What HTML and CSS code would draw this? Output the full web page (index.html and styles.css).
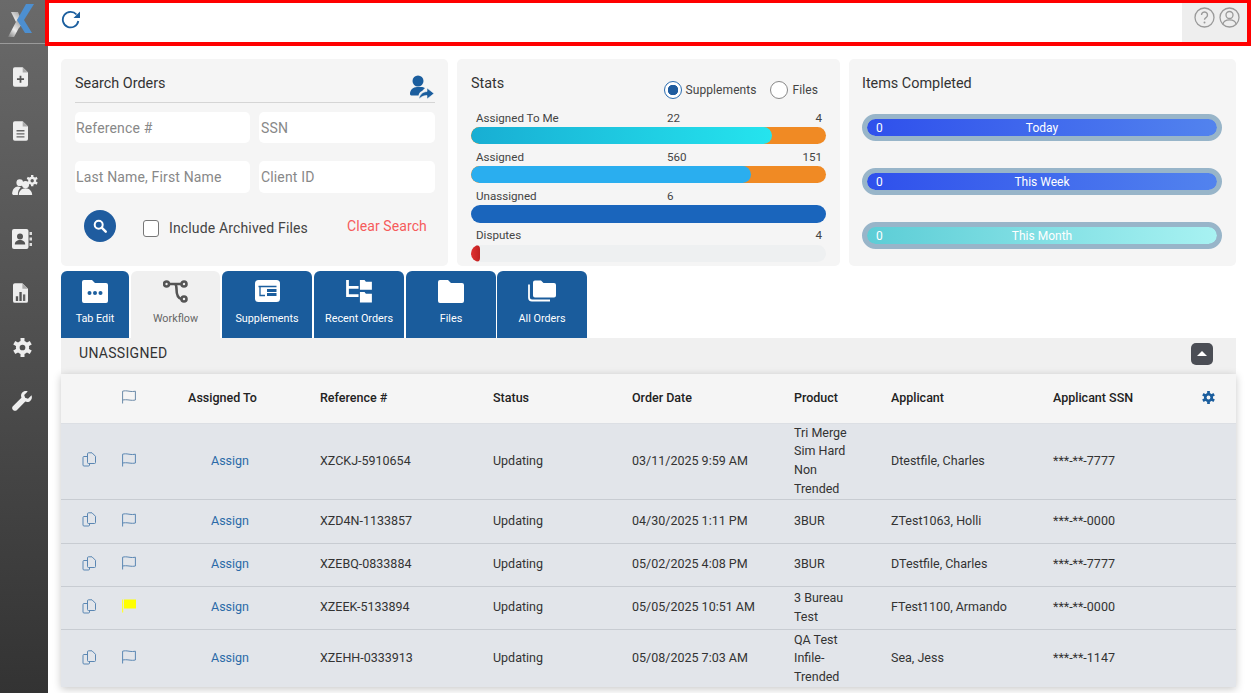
FILE: index.html
```html
<!DOCTYPE html>
<html lang="en">
<head>
<meta charset="utf-8">
<title>Orders</title>
<link rel="stylesheet" href="styles.css">
</head>
<body>
<svg class="defs" width="0" height="0" aria-hidden="true">
  <defs>
    <symbol id="copy" viewBox="0 0 15 15"><path d="M5 4.500H2a1 1 0 0 0-1 1v7.500a1 1 0 0 0 1 1h4.500a1 1 0 0 0 1-1v-1.500M5.500 1.800a1 1 0 0 1 1-1h3.500l3.500 3.500V10.500a1 1 0 0 1-1 1h-6a1 1 0 0 1-1-1z" fill="none" stroke="currentColor" stroke-width="1"/></symbol>
    <symbol id="flag" viewBox="0 0 14 14"><path d="M.6 13.500V1.200c2-.5 3.500-.5 6.400 0s4.500.3 6.400 0v8.800c-2 .4-3.500.4-6.400 0s-4.400-.3-6.400 0" fill="none" stroke="currentColor" stroke-width="1"/></symbol>
    <symbol id="gear" viewBox="0 0 20 20">
      <g fill="none" stroke="currentColor">
        <circle cx="10" cy="10" r="5" stroke-width="4"/>
        <g stroke-width="4.200" stroke-linecap="butt">
          <path d="M10 6V0"/><path d="M10 6V0" transform="rotate(60 10 10)"/><path d="M10 6V0" transform="rotate(120 10 10)"/><path d="M10 6V0" transform="rotate(180 10 10)"/><path d="M10 6V0" transform="rotate(240 10 10)"/><path d="M10 6V0" transform="rotate(300 10 10)"/>
        </g>
      </g>
    </symbol>
  </defs>
</svg>
<div class="app">
  <nav class="sidebar">
    <div class="logo">
      <svg width="28" height="36" viewBox="0 0 28 36">
        <defs>
          <linearGradient id="lg" x1="0" y1="1" x2="0.6" y2="0"><stop offset="0" stop-color="#777"/><stop offset=".5" stop-color="#eee"/><stop offset="1" stop-color="#aaa"/></linearGradient>
        </defs>
        <path d="M4 9h7l4.500 11-3.500 5z" fill="url(#lg)"/>
        <path d="M1 34h6l7-13-3.500-5z" fill="url(#lg)"/>
        <path d="M19 1h8L17 17l8 13h-7L10 17z" fill="#4d8fd0"/>
      </svg>
    </div>
    <a class="nav-item doc"><svg width="15" height="20" viewBox="0 0 17 22"><path d="M2 0h9l6 6v14a2 2 0 0 1-2 2H2a2 2 0 0 1-2-2V2a2 2 0 0 1 2-2z" fill="#eee"/><path d="M11 0v6h6z" fill="#aaa"/><path d="M7.500 9.500h2v3h3v2h-3v3h-2v-3h-3v-2h3z" fill="#555"/></svg></a>
    <a class="nav-item doc"><svg width="15" height="20" viewBox="0 0 17 22"><path d="M2 0h9l6 6v14a2 2 0 0 1-2 2H2a2 2 0 0 1-2-2V2a2 2 0 0 1 2-2z" fill="#eee"/><path d="M11 0v6h6z" fill="#aaa"/><path d="M4 10h9v1.500H4zM4 13.500h9V15H4zM4 17h9v1.500H4z" fill="#666"/></svg></a>
    <a class="nav-item people"><svg width="27" height="21" viewBox="0 0 28 22"><circle cx="8" cy="8" r="3.500" fill="#eee"/><circle cx="14" cy="10" r="3.800" fill="#eee"/><path d="M0 20c0-5 3-8 6-8 2 0 3 1 3 1-2 2-3 4-3 8H1zM7 21c0-4 3-7 7-7s7 3 7 7z" fill="#eee"/><svg x="15" y="0" width="12" height="12" viewBox="0 0 20 20" color="#eee"><use href="#gear"/></svg></svg></a>
    <a class="nav-item"><svg width="20" height="20" viewBox="0 0 20 20"><rect x="0" y="0" width="16.500" height="20" rx="2" fill="#eee"/><path d="M17.500 3H20v3h-2.500zM17.500 8.500H20v3h-2.500zM17.500 14H20v3h-2.500z" fill="#ddd"/><circle cx="8" cy="7.500" r="3" fill="#555"/><path d="M2.800 15.500c0-3 2.300-4.500 5.200-4.500s5.200 1.500 5.200 4.500z" fill="#555"/></svg></a>
    <a class="nav-item doc"><svg width="15" height="20" viewBox="0 0 16 21"><path d="M2 0h8l6 6v13a2 2 0 0 1-2 2H2a2 2 0 0 1-2-2V2a2 2 0 0 1 2-2z" fill="#eee"/><path d="M10 0v6h6z" fill="#aaa"/><path d="M3 14h2.500v5H3zM6.800 9.500h2.500V19H6.800z" fill="#555"/><path d="M10.600 12h2.500v7h-2.500z" fill="#666"/></svg></a>
    <a class="nav-item"><svg class="side-gear"><use href="#gear"/></svg></a>
    <a class="nav-item"><svg width="20" height="20" viewBox="0 0 21 21"><path d="M20.500 4.500l-3.700 3.700-3-1-1-3L16.500.5c-3-1.300-7 .8-7 4.500 0 .8.200 1.400.4 2L.9 16c-1 1-1 2.600 0 3.600l.5.500c1 1 2.600 1 3.600 0l9-9c.6.200 1.200.4 2 .4 3.700 0 5.800-3.800 4.500-7z" fill="#eee"/></svg></a>
  </nav>

  <div class="main">
    <header class="topbar">
      <button class="refresh" aria-label="Refresh">
        <svg width="20" height="20" viewBox="0 0 20 20"><path d="M15.500 5.500A7.800 7.800 0 1 0 17.300 12" fill="none" stroke="#1b5e9e" stroke-width="1.800"/><path d="M19 2.500V9h-6.500z" fill="#1b5e9e"/></svg>
      </button>
      <div class="top-actions">
        <svg width="21" height="21" viewBox="0 0 21 21"><circle cx="10.500" cy="10.500" r="9.500" fill="none" stroke="#9a9a9a" stroke-width="1.300"/><path d="M7.500 8a3 3 0 1 1 4.500 2.600c-1 .6-1.500 1.100-1.500 2.200" fill="none" stroke="#9a9a9a" stroke-width="1.400"/><circle cx="10.500" cy="15.500" r="1" fill="#9a9a9a"/></svg>
        <svg width="21" height="21" viewBox="0 0 21 21"><circle cx="10.500" cy="10.500" r="9.500" fill="none" stroke="#9a9a9a" stroke-width="1.300"/><circle cx="10.500" cy="8" r="3.500" fill="none" stroke="#9a9a9a" stroke-width="1.300"/><path d="M4 17c.5-3 3-4.200 6.500-4.200S16.500 14 17 17" fill="none" stroke="#9a9a9a" stroke-width="1.300"/></svg>
      </div>
    </header>

    <div class="content">
      <section class="panels">
        <div class="panel search">
          <div class="search-head">
            <h2>Search Orders</h2>
            <svg width="24" height="24" viewBox="0 0 24 24"><circle cx="8" cy="6" r="5.500" fill="#1b5e9e"/><path d="M0 19c0-4 3-7 7-7h4c1.500 0 3 .5 4 1l-3 3c-2 1-3 2-3.500 4.500H2c-1 0-2-.5-2-1.500z" fill="#1b5e9e"/><path d="M9 24c.5-4 3-7 8-7.500V13l7 5.500-7 5.500v-3.500c-3 0-5.500 1-8 3.500z" fill="#1b5e9e" stroke="#f5f5f5" stroke-width=".6"/></svg>
          </div>
          <div class="fields">
            <input class="field" placeholder="Reference #">
            <input class="field" placeholder="SSN">
            <input class="field" placeholder="Last Name, First Name">
            <input class="field" placeholder="Client ID">
          </div>
          <div class="search-actions">
            <button class="search-btn" aria-label="Search">
              <svg width="14" height="14" viewBox="0 0 14 14"><circle cx="5.700" cy="5.700" r="4" fill="none" stroke="#fff" stroke-width="2"/><path d="M8.700 8.700l4 4" stroke="#fff" stroke-width="2.400" stroke-linecap="round"/></svg>
            </button>
            <label class="archive"><span class="box"></span>Include Archived Files</label>
            <a class="clear">Clear Search</a>
          </div>
        </div>

        <div class="panel stats">
          <div class="stats-head">
            <h2>Stats</h2>
            <div class="radios">
              <span class="radio on"></span><span class="radio-label">Supplements</span>
              <span class="radio"></span><span class="radio-label">Files</span>
            </div>
          </div>
          <div class="stat">
            <div class="stat-labels"><span>Assigned To Me</span><span>22</span><span>4</span></div>
            <div class="bar orange"><div class="fill cyan s-84"></div></div>
          </div>
          <div class="stat">
            <div class="stat-labels"><span>Assigned</span><span>560</span><span>151</span></div>
            <div class="bar orange"><div class="fill sky s-79"></div></div>
          </div>
          <div class="stat">
            <div class="stat-labels"><span>Unassigned</span><span>6</span><span></span></div>
            <div class="bar navy tall"></div>
          </div>
          <div class="stat">
            <div class="stat-labels"><span>Disputes</span><span></span><span>4</span></div>
            <div class="bar empty"><div class="fill red s-3"></div></div>
          </div>
        </div>

        <div class="panel items">
          <h2>Items Completed</h2>
          <div class="pills">
            <div class="pill blue"><span class="pill-count">0</span><span class="pill-name">Today</span></div>
            <div class="pill blue"><span class="pill-count">0</span><span class="pill-name">This Week</span></div>
            <div class="pill teal"><span class="pill-count">0</span><span class="pill-name">This Month</span></div>
          </div>
        </div>
      </section>

      <div class="tabs">
        <a class="tab t-edit"><svg width="26" height="23" viewBox="0 0 26 23"><path d="M2 0h8l3 3h11a2 2 0 0 1 2 2v16a2 2 0 0 1-2 2H2a2 2 0 0 1-2-2V2a2 2 0 0 1 2-2z" fill="#fff"/><circle cx="7.500" cy="13" r="2" fill="#1b5e9e"/><circle cx="13" cy="13" r="2" fill="#1b5e9e"/><circle cx="18.500" cy="13" r="2" fill="#1b5e9e"/></svg><span>Tab Edit</span></a>
        <a class="tab active t-flow"><svg width="25" height="23" viewBox="0 0 25 23"><g fill="none" stroke="#555" stroke-width="2.600"><circle cx="3.500" cy="4" r="2.500"/><circle cx="21" cy="4" r="2.500"/><circle cx="21" cy="19" r="2.500"/><path d="M6 4h12.500M12 4c1.500 1 1.500 2 1.500 5s0 9 5 10"/></g></svg><span>Workflow</span></a>
        <a class="tab t-supp"><svg width="25" height="23" viewBox="0 0 25 23"><rect width="25" height="22" rx="3.500" fill="#fff"/><g fill="none" stroke="#1b5e9e" stroke-width="1.300"><path d="M3.500 6.500h18M5 6.500v9h5"/></g><path d="M12 9h9.500v3H12zM12 13h9.500v3H12z" fill="#1b5e9e"/></svg><span>Supplements</span></a>
        <a class="tab t-rec"><svg width="28" height="25" viewBox="0 0 28 25"><path d="M1.500 0v17h12M1.500 8h12" fill="none" stroke="#fff" stroke-width="3"/><path d="M15 0h5l1.500 2H28v8.500H15zM15 13h5l1.500 2H28v9.500H15z" fill="#fff"/></svg><span>Recent Orders</span></a>
        <a class="tab t-files"><svg width="26" height="23" viewBox="0 0 26 23"><path d="M2 0h8l3 3h11a2 2 0 0 1 2 2v16a2 2 0 0 1-2 2H2a2 2 0 0 1-2-2V2a2 2 0 0 1 2-2z" fill="#fff"/></svg><span>Files</span></a>
        <a class="tab t-all"><svg width="28" height="22" viewBox="0 0 28 22"><path d="M1 4v13a3 3 0 0 0 3 3h18" fill="none" stroke="#fff" stroke-width="1.800"/><path d="M7 0h6l2.500 2.500H26a2 2 0 0 1 2 2V15a2 2 0 0 1-2 2H7a2 2 0 0 1-2-2V2a2 2 0 0 1 2-2z" fill="#fff"/></svg><span>All Orders</span></a>
      </div>

      <div class="section-bar">
        <span>UNASSIGNED</span>
        <button class="collapse" aria-label="Collapse"></button>
      </div>

      <table class="orders">
        <colgroup>
          <col class="c-copy"><col class="c-flag"><col class="c-assign"><col class="c-ref"><col class="c-status"><col class="c-date"><col class="c-prod"><col class="c-app"><col class="c-ssn"><col class="c-gear">
        </colgroup>
        <thead>
          <tr>
            <th></th>
            <th class="ic"><svg class="i-flag head-flag"><use href="#flag"/></svg></th>
            <th class="center">Assigned To</th>
            <th>Reference #</th>
            <th>Status</th>
            <th>Order Date</th>
            <th>Product</th>
            <th>Applicant</th>
            <th>Applicant SSN</th>
            <th class="ic"><svg class="head-gear"><use href="#gear"/></svg></th>
          </tr>
        </thead>
        <tbody>
          <tr>
            <td class="ic"><svg class="i-copy"><use href="#copy"/></svg></td>
            <td class="ic"><svg class="i-flag"><use href="#flag"/></svg></td>
            <td class="center"><a class="assign">Assign</a></td>
            <td>XZCKJ-5910654</td><td>Updating</td><td>03/11/2025 9:59 AM</td>
            <td class="prod">Tri Merge Sim Hard Non Trended</td><td>Dtestfile, Charles</td><td>***-**-7777</td><td></td>
          </tr>
          <tr>
            <td class="ic"><svg class="i-copy"><use href="#copy"/></svg></td>
            <td class="ic"><svg class="i-flag"><use href="#flag"/></svg></td>
            <td class="center"><a class="assign">Assign</a></td>
            <td>XZD4N-1133857</td><td>Updating</td><td>04/30/2025 1:11 PM</td>
            <td class="prod">3BUR</td><td>ZTest1063, Holli</td><td>***-**-0000</td><td></td>
          </tr>
          <tr>
            <td class="ic"><svg class="i-copy"><use href="#copy"/></svg></td>
            <td class="ic"><svg class="i-flag"><use href="#flag"/></svg></td>
            <td class="center"><a class="assign">Assign</a></td>
            <td>XZEBQ-0833884</td><td>Updating</td><td>05/02/2025 4:08 PM</td>
            <td class="prod">3BUR</td><td>DTestfile, Charles</td><td>***-**-7777</td><td></td>
          </tr>
          <tr>
            <td class="ic"><svg class="i-copy"><use href="#copy"/></svg></td>
            <td class="ic"><svg class="i-flag" viewBox="0 0 14 14"><path d="M0 .5h1.200v13H0z" fill="#ffff33"/><path d="M2 .5h12v9H2z" fill="#ffff00"/></svg></td>
            <td class="center"><a class="assign">Assign</a></td>
            <td>XZEEK-5133894</td><td>Updating</td><td>05/05/2025 10:51 AM</td>
            <td class="prod">3 Bureau Test</td><td>FTest1100, Armando</td><td>***-**-0000</td><td></td>
          </tr>
          <tr>
            <td class="ic"><svg class="i-copy"><use href="#copy"/></svg></td>
            <td class="ic"><svg class="i-flag"><use href="#flag"/></svg></td>
            <td class="center"><a class="assign">Assign</a></td>
            <td>XZEHH-0333913</td><td>Updating</td><td>05/08/2025 7:03 AM</td>
            <td class="prod">QA Test Infile-Trended</td><td>Sea, Jess</td><td>***-**-1147</td><td></td>
          </tr>
        </tbody>
      </table>
    </div>
  </div>
</div>
</body>
</html>
```

FILE: styles.css
```css
* { box-sizing: border-box; }
html, body { margin: 0; height: 100%; overflow: hidden; }
body { font-family: Roboto, "Liberation Sans", sans-serif; font-size: 13px; color: #333; background: #fff; }
.defs { position: absolute; }
a { text-decoration: none; }
button { border: 0; padding: 0; background: none; }
h2 { margin: 0; font-size: 14.400px; font-weight: 400; color: #333; line-height: 20px; }

.app { display: flex; height: 693px; }

.sidebar { flex: 0 0 48px; width: 48px; padding-right: 4px; background: linear-gradient(#6a6a6a, #333); display: flex; flex-direction: column; align-items: center; }
.logo { width: 48px; margin-right: -4px; height: 44px; padding: 3px 0 0 7px; border-bottom: 1px solid #9a9a9a; margin-bottom: 6px; display: flex; align-items: flex-start; }
.nav-item { height: 54px; display: flex; align-items: center; justify-content: center; }
.doc { margin-right: 3px; }
.people { margin-left: 7px; }
.side-gear { width: 19px; height: 19px; color: #eee; }

.main { flex: 1; min-width: 0; display: flex; flex-direction: column; }

.topbar { height: 47px; margin: -1px 0 0 -3px; border: 4px solid #f00; display: flex; justify-content: space-between; position: relative; background: #fff; flex: none; }
.refresh { width: 44px; height: 32px; display: flex; align-items: center; justify-content: center; }
.top-actions { width: 65px; background: #eee; display: flex; align-items: flex-start; gap: 4px; padding: 4px 0 0 12px; }

.content { padding: 13px 15px 0 13px; flex: 1; min-height: 0; }

.panels { display: grid; grid-template-columns: 387px 383px 387px; grid-template-rows: 207px; gap: 9px; }
.panel { background: #f5f5f5; border-radius: 5px; padding: 15px 14px 0; }

.search { padding-right: 13px; }
.search-head { display: flex; justify-content: space-between; align-items: flex-start; height: 29px; border-bottom: 1px solid #d5d5d5; }
.search-head svg { margin-top: 1px; margin-right: 1px; }
.fields { display: grid; grid-template-columns: 175px 176px; grid-template-rows: 31px 32px; column-gap: 9px; row-gap: 18px; margin-top: 9px; }
.field { border: 0; border-radius: 5px; background: #fff; padding: 0 1px; font: 14px Roboto, sans-serif; letter-spacing: .15px; color: #333; outline: 0; min-width: 0; }
.field:nth-child(even) { padding-left: 2px; }
.field::placeholder { color: #888; opacity: 1; }
.search-actions { display: flex; align-items: center; margin-top: 17px; height: 32px; }
.search-btn { width: 32px; height: 32px; border-radius: 50%; background: #1f5c9f; margin-left: 9px; display: flex; align-items: center; justify-content: center; }
.archive { display: flex; align-items: center; gap: 10px; margin-left: 27px; font-size: 14px; letter-spacing: .15px; color: #444; padding-top: 4px; }
.box { width: 16px; height: 17px; border: 1.500px solid #777; border-radius: 3px; background: #fff; }
.clear { margin-left: 39px; font-size: 14px; letter-spacing: .1px; color: #f55b5b; }

.stats-head { display: flex; justify-content: space-between; height: 36px; }
.radios { display: flex; align-items: center; height: 20px; margin-top: 6px; padding-right: 8px; font-size: 12px; letter-spacing: .08px; color: #444; }
.radio { width: 18px; height: 18px; border: 1.500px solid #888; border-radius: 50%; background: #fff; }
.radio.on { border-color: #2a6cb0; background: radial-gradient(circle, #1f5c9f 0 5px, #fff 5.500px); }
.radio-label { margin: 0 13px 0 4px; }
.radio-label:last-child { margin: 0 0 0 5px; }
.stat { height: 39px; }
.stat-labels { display: grid; grid-template-columns: 191px 1fr auto; padding: 0 4px 0 5px; font-size: 11.600px; color: #444; height: 15px; line-height: 17px; }
.bar { height: 17px; border-radius: 9px; overflow: hidden; margin-top: 2px; }
.bar.tall { height: 18px; }
.orange { background: #f08a24; }
.navy { background: #1a65bc; }
.bar.empty { background: #eef0f1; margin-top: 3px; }
.fill { height: 100%; border-radius: 9px; }
.cyan { background: linear-gradient(90deg, #18aed3, #25e4ee); }
.sky { background: #2aaeef; }
.red { background: linear-gradient(90deg, #e03030, #c02020); border-radius: 4px; }
.s-84 { width: 84.800%; }
.s-79 { width: 79%; }
.s-3 { width: 9px; }

.items { padding-left: 13px; }
.pills { display: flex; flex-direction: column; gap: 27px; margin-top: 20px; }
.pill { height: 27px; border: 5px solid #98b5c9; border-radius: 14px; display: grid; grid-template-columns: 1fr auto 1fr; align-items: center; padding: 0 9px; color: #fff; font-size: 12px; }
.pill-name { grid-column: 2; }
.pill-count { grid-column: 1; grid-row: 1; }
.blue { background: linear-gradient(90deg, #2f50ec, #5283ee) padding-box, #98b5c9; }
.teal { background: linear-gradient(90deg, #5ccdd6, #a8f2f2) padding-box, #98b5c9; }

.tabs { display: flex; gap: 2px; height: 67px; margin-top: 5px; }
.tab { height: 67px; width: 90px; border-radius: 6px 6px 0 0; background: #1a5c9c; color: #fff; font-size: 10.800px; display: flex; flex-direction: column; align-items: center; justify-content: flex-start; padding-top: 9px; position: relative; }
.tab svg { height: 23px; }
.tab span { position: absolute; top: 41px; left: 0; right: 0; text-align: center; line-height: 13px; }
.t-edit { width: 68px; }
.t-flow { width: 89px; }
.t-flow span { color: #666; }
.active { background: #f0f0f0; color: #555; }
.t-all { margin-left: -1px; }

.section-bar { height: 36px; background: #f0f0f0; display: flex; align-items: center; justify-content: space-between; padding: 0 23px 4px 18px; font-size: 14px; color: #333; letter-spacing: .3px; }
.section-bar span { margin-top: -2px; }
.collapse { width: 22px; height: 22px; border-radius: 5px; background: #4b4e55; position: relative; }
.collapse::after { content: ""; position: absolute; left: 6px; top: 8px; border: 5px solid transparent; border-top: 0; border-bottom: 5px solid #fff; }

.orders { width: 1175px; border-collapse: collapse; table-layout: fixed; box-shadow: 0 2px 8px rgba(0,0,0,.22); }
.c-copy { width: 48px; } .c-flag { width: 41px; } .c-assign { width: 160px; } .c-ref { width: 173px; } .c-status { width: 139px; } .c-date { width: 162px; } .c-prod { width: 97px; } .c-app { width: 162px; } .c-ssn { width: 147px; } .c-gear { width: 46px; }
thead tr { background: #f5f5f5; height: 49px; }
th { font-size: 12.500px; font-weight: 500; text-align: left; padding: 0 10px 2px; color: #222; }
th.center { padding-right: 25px; }
tbody tr { background: #e2e5ea; height: 43px; border-top: 1px solid #c8ccd2; }
tbody tr:first-child { border-top: 1px solid #dcdfe4; height: 76px; }
tbody tr:nth-child(2) { height: 44px; }
tbody tr:last-child { height: 57px; }
tbody tr:last-child td { padding-top: 1px; }
td { font-size: 12.500px; line-height: 18.700px; padding: 0 10px; color: #333; }
.center { text-align: center; }
td.ic { padding: 0 0 3px 21px; }
th.ic { padding: 0 0 2px 13px; }
td:nth-child(2).ic { padding-left: 13px; }
th:last-child.ic { padding-left: 12px; }
.ic svg { display: block; }
.i-copy { width: 15px; height: 15px; color: #5b87b3; }
.i-flag { width: 14px; height: 14px; color: #5b87b3; }
.head-flag { color: #6b8aa8; }
.head-gear { width: 13px; height: 13px; color: #1b5e9e; }
.prod { padding-right: 28px; }
.assign { color: #2a6aa8; }
```
